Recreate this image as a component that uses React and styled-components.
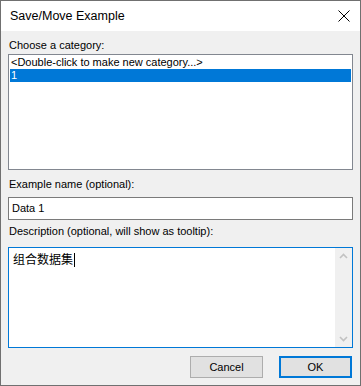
import React from 'react';
import styled, { createGlobalStyle } from 'styled-components';

const GlobalStyle = createGlobalStyle`
  html, body {
    margin: 0;
    padding: 0;
    background: #ffffff;
  }
  * {
    box-sizing: border-box;
  }
`;

const Window = styled.div`
  width: 361px;
  height: 386px;
  border: 1px solid #707070;
  background: #f0f0f0;
  display: flex;
  flex-direction: column;
  font-family: "Liberation Sans", Arial, "Noto Sans CJK SC", sans-serif;
  font-size: 11px;
  color: #000;
`;

const TitleBar = styled.div`
  height: 30px;
  background: #ffffff;
  display: flex;
  align-items: center;
  justify-content: space-between;
  padding: 0 9px 0 9px;
  flex-shrink: 0;
`;

const Title = styled.span`
  font-size: 12.5px;
  color: #000;
`;

const CloseButton = styled.div`
  width: 12px;
  height: 12px;
  display: flex;
  margin-right: 1px;
`;

const Body = styled.div`
  flex: 1;
  display: flex;
  flex-direction: column;
  padding: 7px 7px 0 7px;
`;

const Label = styled.div`
  height: 15px;
  line-height: 15px;
  padding-left: 1px;
  margin-bottom: ${(p) => p.$gap || 1}px;
  white-space: nowrap;
`;

const ListBox = styled.div`
  height: 116px;
  border: 1px solid #828790;
  background: #fff;
  padding: 1px 1px;
  margin-bottom: 7px;
`;

const ListItem = styled.div`
  height: 13px;
  line-height: 13px;
  padding-left: 1px;
  overflow: hidden;
  background: ${(p) => (p.$selected ? '#0078d7' : 'transparent')};
  color: ${(p) => (p.$selected ? '#fff' : '#000')};
  white-space: nowrap;
`;

const TextInput = styled.div`
  height: 23px;
  border: 1px solid #7a7a7a;
  background: #fff;
  line-height: 21px;
  padding-left: 3px;
  margin-bottom: 4px;
`;

const TextArea = styled.div`
  height: 101px;
  border: 1px solid #0078d7;
  background: #fff;
  display: flex;
`;

const TextContent = styled.div`
  flex: 1;
  padding: 3px 4px;
  font-size: 12px;
  line-height: 16px;
  font-family: "Noto Sans CJK SC", sans-serif;
`;

const Caret = styled.span`
  display: inline-block;
  width: 1px;
  height: 14px;
  margin-left: 1px;
  background: #000;
  vertical-align: -3px;
`;

const ScrollBar = styled.div`
  width: 17px;
  background: #f0f0f0;
  display: flex;
  flex-direction: column;
  justify-content: space-between;
  align-items: center;
  padding: 5px 0;
`;

const Footer = styled.div`
  display: flex;
  justify-content: flex-end;
  gap: 16px;
  padding: 8px 1px 0 0;
`;

const Button = styled.button`
  width: 73px;
  height: 22px;
  background: #e1e1e1;
  border: ${(p) => (p.$default ? '2px solid #0078d7' : '1px solid #adadad')};
  font-family: inherit;
  font-size: 11px;
  color: #000;
  padding: 0;
`;

const Arrow = ({ down }) => (
  <svg width="9" height="6" viewBox="0 0 9 6">
    <path
      d={down ? 'M1 1 L4.5 4.5 L8 1' : 'M1 5 L4.5 1.5 L8 5'}
      fill="none"
      stroke="#c2c2c2"
      strokeWidth="1.6"
    />
  </svg>
);

export default function App() {
  return (
    <>
      <GlobalStyle />
      <Window>
        <TitleBar>
          <Title>Save/Move Example</Title>
          <CloseButton>
            <svg width="12" height="12" viewBox="0 0 12 12">
              <path d="M0.5 0.5 L11.5 11.5 M11.5 0.5 L0.5 11.5" stroke="#000" strokeWidth="1" />
            </svg>
          </CloseButton>
        </TitleBar>
        <Body>
          <Label>Choose a category:</Label>
          <ListBox>
            <ListItem>&lt;Double-click to make new category...&gt;</ListItem>
            <ListItem $selected>1</ListItem>
          </ListBox>
          <Label $gap={5}>Example name (optional):</Label>
          <TextInput>Data 1</TextInput>
          <Label $gap={8}>Description (optional, will show as tooltip):</Label>
          <TextArea>
            <TextContent>
              组合数据集<Caret />
            </TextContent>
            <ScrollBar>
              <Arrow />
              <Arrow down />
            </ScrollBar>
          </TextArea>
          <Footer>
            <Button>Cancel</Button>
            <Button $default>OK</Button>
          </Footer>
        </Body>
      </Window>
    </>
  );
}
